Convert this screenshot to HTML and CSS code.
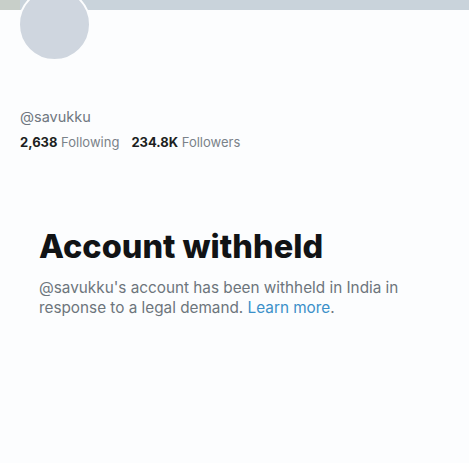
FILE: index.html
```html
<!DOCTYPE html>
<html>
<head>
<meta charset="utf-8">
<link rel="stylesheet" href="styles.css">
</head>
<body>
<div class="page">
  <div class="banner"><div class="banner-left"></div></div>
  <div class="avatar"></div>
  <div class="profile">
    <div class="handle">@savukku</div>
    <div class="stats">
      <span class="stat"><b>2,638</b> Following</span>
      <span class="stat"><b>234.8K</b> Followers</span>
    </div>
  </div>
  <div class="notice">
    <h1 class="title">Account withheld</h1>
    <p class="desc">@savukku's account has been withheld in India in response to a legal demand. <a class="link">Learn more</a>.</p>
  </div>
</div>
</body>
</html>
```
FILE: styles.css
```css
html, body {
  margin: 0;
  padding: 0;
  background: #fcfdfe;
}
.page {
  position: relative;
  width: 469px;
  height: 463px;
  overflow: hidden;
  font-family: Inter, "Liberation Sans", Arial, sans-serif;
}
.banner {
  height: 10px;
  background: #c9d3db;
  display: flex;
}
.banner-left {
  width: 20px;
  background: #c8cfc9;
}
.avatar {
  position: absolute;
  left: 18px;
  top: -12px;
  width: 69px;
  height: 69px;
  border-radius: 50%;
  background: #cfd6df;
  border: 2px solid #fcfdfe;
}
.profile {
  padding: 98px 0 0 20px;
}
.handle {
  font-size: 14.5px;
  color: #6f7780;
  line-height: 18px;
}
.stats {
  margin-top: 8px;
  display: flex;
  gap: 12px;
  font-size: 13px;
  color: #7a8289;
  line-height: 17px;
}
.stats b {
  color: #1c1f22;
  font-weight: 700;
}
.notice {
  padding: 77px 30px 0 39px;
}
.title {
  margin: 0;
  font-size: 32.5px;
  font-weight: 800;
  color: #111315;
  line-height: 38px;
}
.desc {
  margin: 12px 0 0;
  font-size: 15.3px;
  line-height: 20px;
  color: #6d757c;
}
.link {
  color: #3b90c9;
}
```
